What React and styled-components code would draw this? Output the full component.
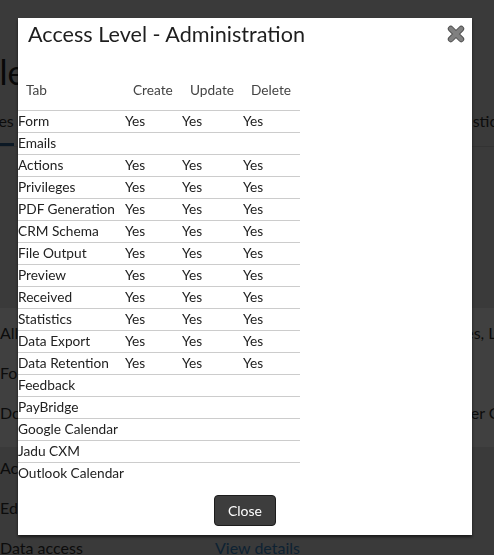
import React from "react";
import styled, { createGlobalStyle } from "styled-components";

const GlobalStyle = createGlobalStyle`
  html, body {
    margin: 0;
    padding: 0;
    background: #e6e6e6;
    overflow: hidden;
  }
  body {
    font-family: Lato, "Open Sans", "Liberation Sans", sans-serif;
    color: #333;
  }
`;

/* ---------- page behind the dialog ---------- */

const Page = styled.div`
  width: calc(100% + 40px);
  margin-left: -40px;
  height: 555px;
  overflow: hidden;
  font-size: 16px;
`;

const Heading = styled.h1`
  margin: 0;
  padding-top: 52px;
  font-size: 34px;
  font-weight: 400;
  line-height: 40px;
  color: #222;
`;

const Tabs = styled.div`
  display: flex;
  gap: 18px;
  margin-top: 7px;
  border-bottom: 1px solid #ccc;
`;

const Tab = styled.div`
  flex-shrink: 0;
  padding: 12px 0 12px ${(p) => (p.$first ? "16px" : "0")};
  margin-left: ${(p) => (p.$push ? "auto" : "0")};
  margin-right: ${(p) => (p.$push ? "-10px" : "0")};
  line-height: 20px;
  white-space: nowrap;
  border-bottom: 3px solid ${(p) => (p.$active ? "#2f5f8f" : "transparent")};
`;

const Band = styled.div`
  margin-top: 161px;
  padding: 4px 0 15px;
  background: #fff;
`;

const Row = styled.div`
  display: grid;
  grid-template-columns: 215px 1fr;
  height: 40px;
  align-items: center;
  padding-left: 40px;
  color: #333;
  white-space: nowrap;
`;

const Link = styled.span`
  color: #3a86c8;
`;

/* ---------- dialog ---------- */

const Overlay = styled.div`
  position: fixed;
  inset: 0;
  background: rgba(0, 0, 0, 0.75);
`;

const Modal = styled.div`
  position: fixed;
  top: 18px;
  left: 18px;
  width: 454px;
  background: #fff;
  box-shadow: 0 2px 3px rgba(0, 0, 0, 0.6);
  font-family: Lato, "Open Sans", "Liberation Sans", sans-serif;
`;

const Header = styled.div`
  display: flex;
  align-items: center;
  justify-content: space-between;
  padding: 1px 7px 3px 10px;
`;

const Title = styled.h4`
  margin: 0;
  font-size: 21.6px;
  font-weight: 400;
  line-height: 30px;
  color: #1e1e1e;
`;

const CloseIcon = styled.button`
  display: flex;
  padding: 0;
  border: 0;
  background: none;
  cursor: pointer;
`;

const Table = styled.table`
  margin-top: 22px;
  border-collapse: collapse;
  table-layout: fixed;
  width: 282px;
  font-size: 13.7px;
  color: #222;

  th {
    padding: 6px 8px 10px;
    line-height: 20px;
    font-weight: 400;
    text-align: left;
    color: #444;
    border-bottom: 1px solid #ccc;
  }

  td {
    padding: 0 0 2px;
    line-height: 19px;
    white-space: nowrap;
    border-top: 1px solid #ccc;
  }
`;

const Footer = styled.div`
  display: flex;
  justify-content: center;
  padding: 11px 0 9px;
`;

const Button = styled.button`
  width: 62px;
  height: 31px;
  border: 1px solid #1c1c1c;
  border-radius: 4px;
  background: #3d3d3d;
  color: #fff;
  font-family: inherit;
  font-size: 14px;
  padding: 0;
`;

const rows = [
  ["Form", true],
  ["Emails", false],
  ["Actions", true],
  ["Privileges", true],
  ["PDF Generation", true],
  ["CRM Schema", true],
  ["File Output", true],
  ["Preview", true],
  ["Received", true],
  ["Statistics", true],
  ["Data Export", true],
  ["Data Retention", true],
  ["Feedback", false],
  ["PayBridge", false],
  ["Google Calendar", false],
  ["Jadu CXM", false],
  ["Outlook Calendar", false],
];

const XIcon = () => (
  <svg width="18" height="18" viewBox="0 0 18 18">
    <path d="M3.8 3.8 L14.2 14.2 M14.2 3.8 L3.8 14.2" stroke="#4e4e4e" strokeWidth="6" strokeLinecap="round" />
    <path d="M3.8 3.8 L14.2 14.2 M14.2 3.8 L3.8 14.2" stroke="#808080" strokeWidth="4.2" strokeLinecap="round" />
  </svg>
);

export default function App() {
  return (
    <>
      <GlobalStyle />
      <Page>
        <Heading>Role</Heading>
        <Tabs>
          <Tab $first $active>Rules</Tab>
          <Tab>Permissions</Tab>
          <Tab $push>Statistics</Tab>
        </Tabs>
        <Band>
          <Row><span>Allowed areas</span><span>Form, Administration, Form Templates, Lists</span></Row>
          <Row><span>Forms</span><span>All</span></Row>
          <Row><span>Domains</span><span>Default domain and also the Customer Centre</span></Row>
        </Band>
        <Row><span>Access level</span><span>Administration</span></Row>
        <Row><span>Editable</span><span>Yes</span></Row>
        <Row><span>Data access</span><Link>View details</Link></Row>
      </Page>
      <Overlay />
      <Modal>
        <Header>
          <Title>Access Level - Administration</Title>
          <CloseIcon aria-label="Close"><XIcon /></CloseIcon>
        </Header>
        <Table>
          <colgroup>
            <col style={{ width: 107 }} />
            <col style={{ width: 57 }} />
            <col style={{ width: 61 }} />
            <col style={{ width: 57 }} />
          </colgroup>
          <thead>
            <tr>
              <th>Tab</th>
              <th>Create</th>
              <th>Update</th>
              <th>Delete</th>
            </tr>
          </thead>
          <tbody>
            {rows.map(([name, yes]) => (
              <tr key={name}>
                <td>{name}</td>
                <td>{yes ? "Yes" : ""}</td>
                <td>{yes ? "Yes" : ""}</td>
                <td>{yes ? "Yes" : ""}</td>
              </tr>
            ))}
          </tbody>
        </Table>
        <Footer>
          <Button>Close</Button>
        </Footer>
      </Modal>
    </>
  );
}
